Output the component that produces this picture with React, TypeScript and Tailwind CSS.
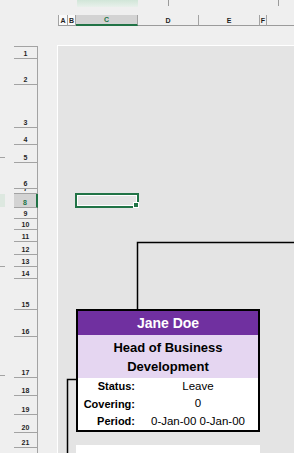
const rowHeights = [12, 26, 43, 17, 18, 26, 5, 14, 11, 11, 12, 13, 12, 12, 31, 27, 41, 18, 19, 18, 15, 18];

const columns = [
  { label: "A", w: "w-[10px]", light: true },
  { label: "B", w: "w-[8px]", light: true },
  { label: "C", w: "w-[62px]", selected: true },
  { label: "D", w: "w-[61px]" },
  { label: "E", w: "w-[61px]" },
  { label: "F", w: "w-[7px]" },
];

const details = [
  { label: "Status:", value: "Leave", h: "h-[17px]" },
  { label: "Covering:", value: "0", h: "h-[18px]" },
  { label: "Period:", value: "0-Jan-00 0-Jan-00", h: "h-[17px]" },
];

const ColumnHeaders = () => (
  <div className="ml-[58px] mt-[8px] flex h-[11px]">
    {columns.map((col, i) => (
      <div
        key={col.label}
        className={`${col.w} flex items-center justify-center border-r border-[#a3a3a3] text-[7px] font-bold leading-none ${
          i === 0 ? "border-l" : ""
        } ${
          col.selected
            ? "border-b-2 border-b-[#217346] bg-[#d3d3d3] text-[#217346]"
            : "border-b border-b-[#9b9b9b] text-[#1f1f1f]"
        } ${col.light ? "bg-[#f9f9f9]" : ""}`}
      >
        {col.label}
      </div>
    ))}
    <div className="flex-1 border-b border-[#9b9b9b]" />
  </div>
);

const RowHeaders = () => (
  <div className="mt-px grid w-[24px] border-t border-[#a3a3a3] grid-rows-[12px_26px_43px_17px_18px_26px_5px_14px_11px_11px_12px_13px_12px_12px_31px_27px_41px_18px_19px_18px_15px_18px]">
    {rowHeights.map((_, i) => {
      const selected = i === 7;
      return (
        <div
          key={i}
          className={`flex items-end justify-center overflow-hidden border-b border-[#a3a3a3] text-[7px] font-bold leading-[7px] ${
            selected
              ? "border-r-2 border-r-[#217346] bg-[#d3d3d3] text-[#217346]"
              : "border-r border-r-[#a3a3a3] text-[#1f1f1f]"
          }`}
        >
          <span className="pb-px">{i + 1}</span>
        </div>
      );
    })}
  </div>
);

const EmployeeCard = () => (
  <div className="col-start-3 col-span-3 row-start-16 row-span-5 self-start border-2 border-black bg-white">
    <div className="flex h-[24px] items-center justify-center bg-[#7030a0] text-[14px] font-bold text-white">
      Jane Doe
    </div>
    <div className="flex h-[43px] items-center justify-center bg-[#e5d6f1] px-2 text-center text-[13px] font-bold leading-[19px] text-black">
      Head of Business Development
    </div>
    {details.map((row) => (
      <div key={row.label} className={`grid ${row.h} grid-cols-[60px_1fr] items-center`}>
        <span className="pr-[3px] text-right text-[11px] font-bold text-black">{row.label}</span>
        <span className="text-center text-[11.5px] text-black">{row.value}</span>
      </div>
    ))}
  </div>
);

const Sheet = () => (
  <div className="relative ml-[19px] flex-1 border-l border-t border-white bg-[#e4e4e4]">
    <div className="grid grid-cols-[10px_8px_62px_61px_61px_7px_1fr] grid-rows-[12px_26px_43px_17px_18px_26px_5px_14px_11px_11px_12px_13px_12px_12px_31px_27px_41px_18px_19px_18px_15px_18px]">
      <div className="relative col-start-3 row-start-8">
        <div className="absolute -left-px -right-px top-0 -bottom-px border-2 border-[#217346]">
          <div className="h-full w-full border border-white" />
          <div className="absolute -bottom-[2px] -right-[2px] h-[6px] w-[6px] border border-white bg-[#217346]" />
        </div>
      </div>
      <EmployeeCard />
      <div className="col-start-3 col-span-3 row-start-22 -mt-[2px] bg-white" />
    </div>
    <svg className="pointer-events-none absolute left-0 top-0" width="236" height="420">
      <path d="M79.5 263 V196.5 H240" fill="none" stroke="#000" strokeWidth="1.5" />
      <path d="M9.5 420 V333.5 H18" fill="none" stroke="#000" strokeWidth="1.5" />
    </svg>
  </div>
);

export default function App() {
  return (
    <div className="h-[453px] w-[294px] overflow-hidden bg-[#efefef] font-['Liberation_Sans',Arial,sans-serif]">
      <div className="flex h-[7px] items-start">
        <div className="w-[77px]" />
        <div className="h-[7px] w-[61px] bg-gradient-to-b from-[#d1e6d8] to-[#e8f0eb]" />
        <div className="w-[30px]" />
        <div className="h-[6px] w-px bg-[#9a9a9a]" />
        <div className="w-[109px]" />
        <div className="h-[6px] w-px bg-[#9a9a9a]" />
      </div>
      <ColumnHeaders />
      <div className="mt-[19px] flex">
        <div className="flex w-[14px] flex-col">
          <div className="mt-[112px] h-px w-[5px] bg-[#a3a3a3]" />
          <div className="mt-[36px] h-[13px] w-[5px] bg-[#dde8e0]" />
          <div className="mt-[59px] h-px w-[5px] bg-[#a3a3a3]" />
          <div className="mt-[108px] h-px w-[5px] bg-[#a3a3a3]" />
        </div>
        <RowHeaders />
        <Sheet />
      </div>
    </div>
  );
}
